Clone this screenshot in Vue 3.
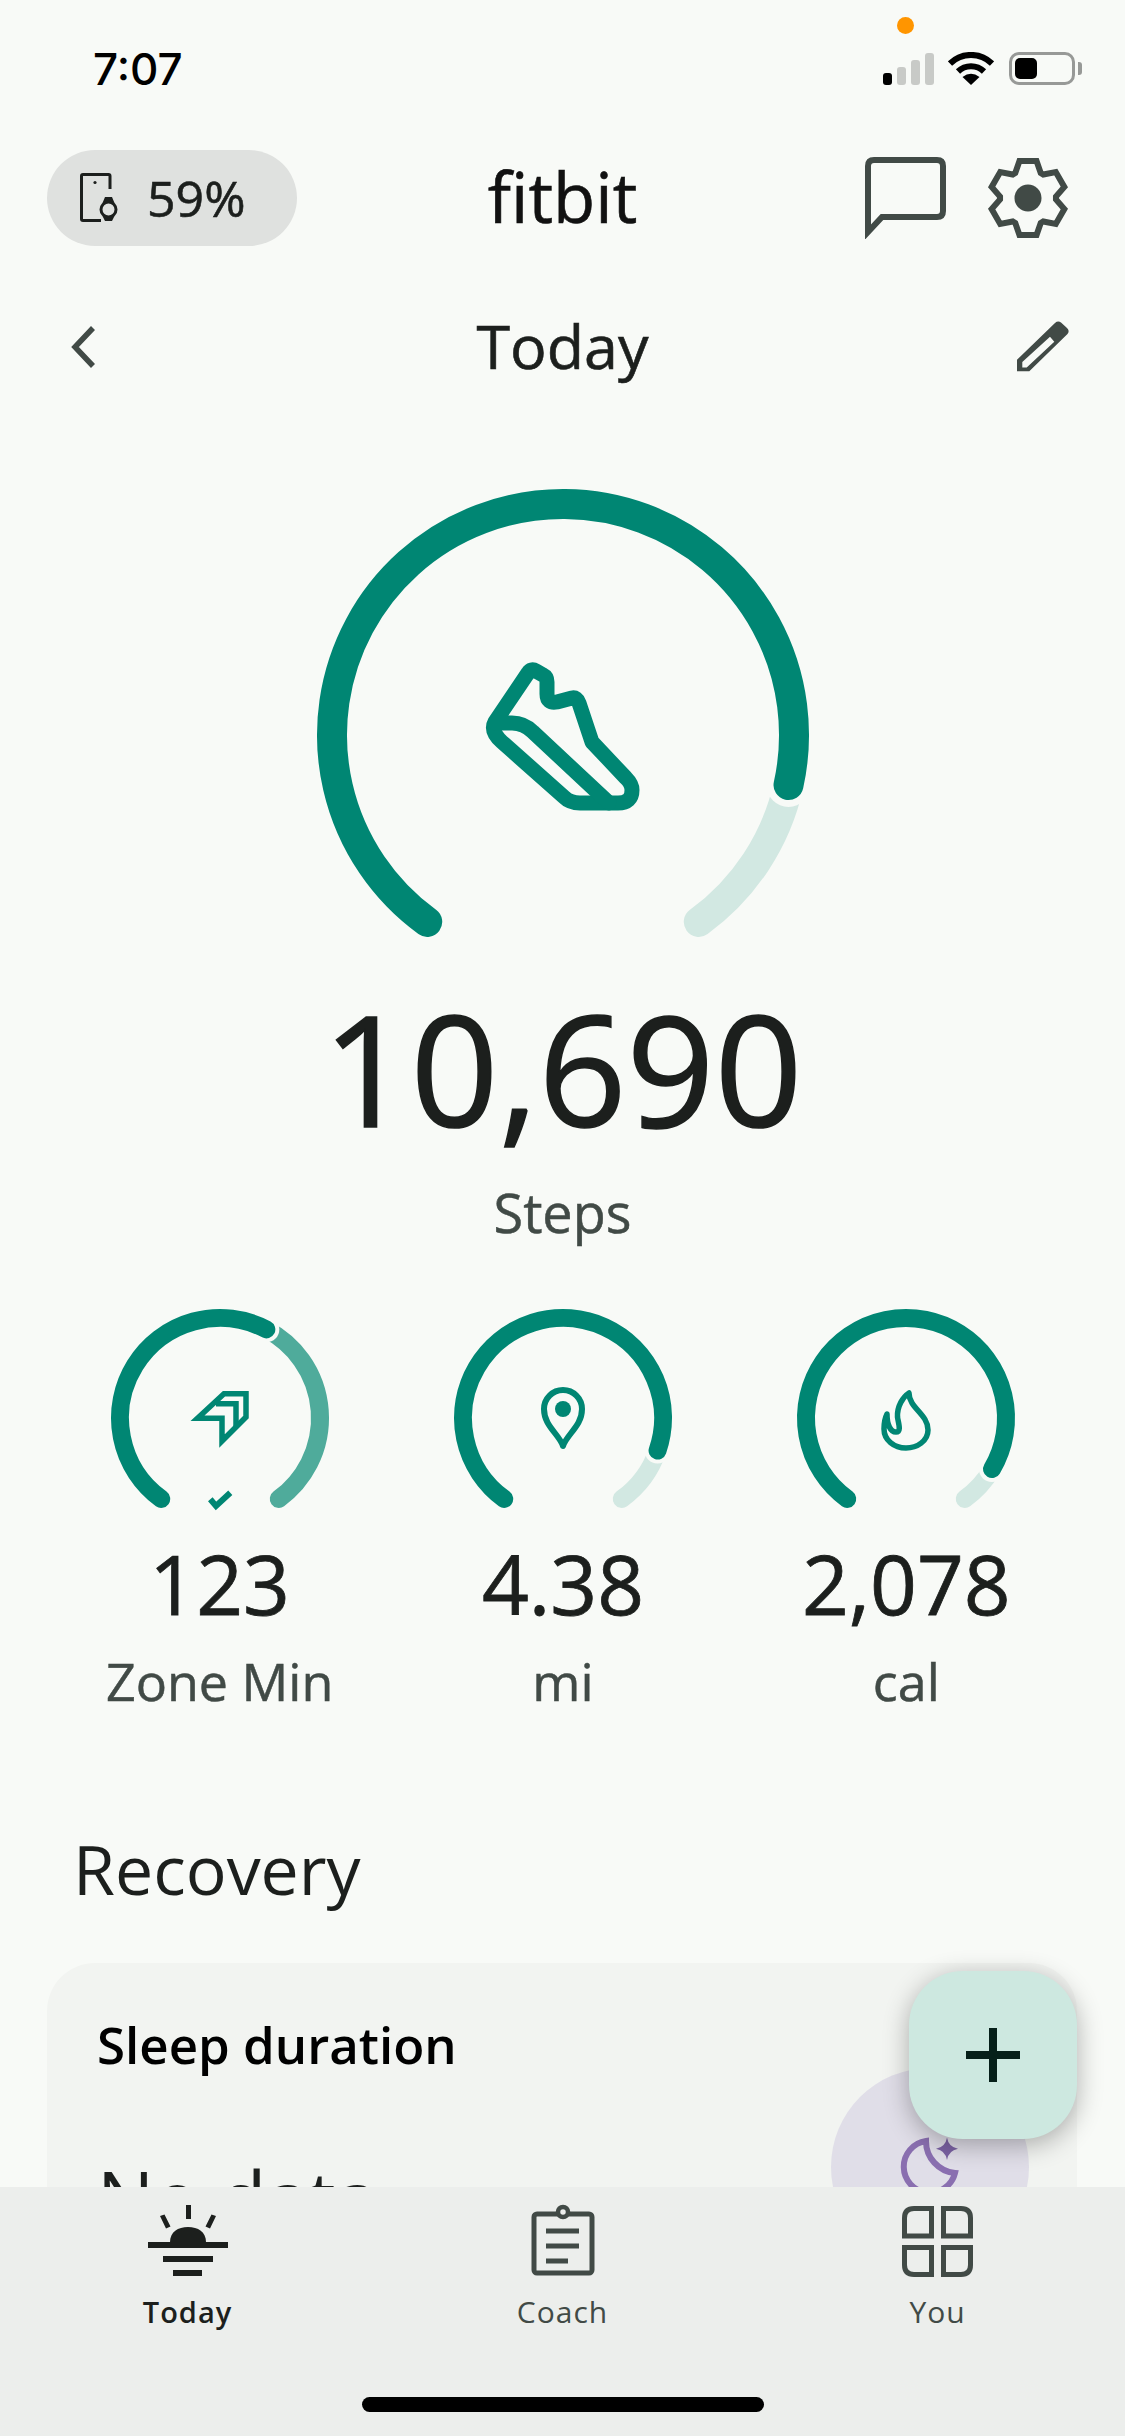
<template>
  <div class="page">
    <div class="main">
      <!-- Status bar -->
      <div class="status">
        <span class="time">7:07</span>
        <span class="rec-dot"></span>
        <div class="status-right">
          <div class="signal">
            <i class="on" style="height: 12px"></i>
            <i style="height: 18px"></i>
            <i style="height: 25px"></i>
            <i style="height: 32px"></i>
          </div>
          <svg class="wifi" width="46" height="33" viewBox="0 0 46 33" fill="none" stroke="#000" stroke-width="6">
            <path d="M2 11.5 A30 30 0 0 1 44 11.5" />
            <path d="M10 19.5 A18.5 18.5 0 0 1 36 19.5" />
            <path d="M23 33 L14.5 25 Q23 18.5 31.5 25 Z" fill="#000" stroke="none" />
          </svg>
          <div class="battery"><span class="battery-fill"></span></div>
          <span class="battery-nub"></span>
        </div>
      </div>

      <!-- Header -->
      <div class="header">
        <div class="pill">
          <svg width="40" height="54" viewBox="0 0 40 54" fill="none" stroke="#1c1f1d" stroke-width="3">
            <path d="M30 18 V5 Q30 3.5 28.5 3.5 H3 Q1.5 3.5 1.5 5 V48 Q1.5 49.5 3 49.5 H21" />
            <circle cx="15" cy="11.5" r="1.6" fill="#1c1f1d" stroke="none" />
            <circle cx="28.5" cy="38.5" r="7.5" />
            <path d="M22.5 32 L25 26 H32 L34.5 32 Z M22.5 45 L25 50 H32 L34.5 45 Z" fill="#1c1f1d" stroke="none" />
          </svg>
          <span class="pill-text">59%</span>
        </div>
        <div class="logo">fitbit</div>
        <div class="header-actions">
          <svg width="81" height="82" viewBox="0 0 81 82" fill="none" stroke="#414a46" stroke-width="6">
            <path d="M3 75 V9 Q3 3 9 3 H72 Q78 3 78 9 V54 Q78 60 72 60 H17 Z" />
          </svg>
          <svg width="82" height="82" viewBox="-41 -41 82 82" fill="none" stroke="#414a46" stroke-width="6">
            <path :d="gearPath" />
            <circle r="13.5" fill="#414a46" stroke="none" />
          </svg>
        </div>
      </div>

      <!-- Date row -->
      <div class="date-row">
        <svg class="back" width="28" height="46" viewBox="0 0 28 46" fill="none" stroke="#414a46" stroke-width="5.5">
          <path d="M24 4 L6 23 L24 42" />
        </svg>
        <span class="date-title">Today</span>
        <svg class="edit" width="55" height="54" viewBox="0 0 55 54">
          <path fill="#414a46" fill-rule="evenodd" d="M2 39.7 L40 3 Q43 0.5 46 2.5 L52 8 Q55 11 52.5 14 L14.3 51.3 H2 Z M7.3 42 L35 16.7 L39.3 21.7 L11.7 47.5 H7.3 Z" />
        </svg>
      </div>

      <!-- Steps ring -->
      <div class="hero">
        <svg width="520" height="470" viewBox="0 0 520 470" fill="none" stroke-linecap="round">
          <path :d="arc(260, 255, 231, 102.5, 144)" stroke="#d2e8e2" stroke-width="30" />
          <circle :cx="polar(260, 255, 231, 102.5).x" :cy="polar(260, 255, 231, 102.5).y" r="22" fill="#f8faf7" />
          <path :d="arc(260, 255, 231, -144, 102.5)" stroke="#008673" stroke-width="30" />
          <g transform="translate(-303 -480)" stroke="#008673" stroke-width="15" stroke-linejoin="round">
            <path d="M495 722 L528 673 Q531 668 536 671 L543 675 Q547 677 547 682 V694 Q547 704 557 702 L572 698 Q577 697 579 703 L592 742 L626 778 Q632 784 632 790 Q632 803 618 803 H580 Q570 803 564 797 L502 742 Q490 731 495 722 Z" />
            <path d="M495 723 H512 Q524 723 533 732 L609 803" />
          </g>
        </svg>
        <div class="hero-value">10,690</div>
        <div class="hero-label">Steps</div>
      </div>

      <!-- Small rings -->
      <div class="stats">
        <div v-for="s in stats" :key="s.label" class="stat">
          <svg width="240" height="220" viewBox="0 0 240 220" fill="none" stroke-linecap="round">
            <path :d="arc(120, 120, 100, s.end, 144)" :stroke="s.rest" stroke-width="18" />
            <circle :cx="polar(120, 120, 100, s.end).x" :cy="polar(120, 120, 100, s.end).y" r="13" fill="#f8faf7" />
            <path :d="arc(120, 120, 100, -144, s.end)" stroke="#008673" stroke-width="18" />

            <g v-if="s.icon === 'zone'" stroke="#008673" stroke-linecap="butt">
              <path d="M124 95.7 H146 V119 L122 143 V120.3 H97.5 Z" stroke-width="5.5" />
              <path d="M116 105.7 H136 V128" stroke-width="5.5" />
              <path d="M110.3 201.3 L116 208 L130.3 194.7" stroke-width="6" />
            </g>
            <g v-else-if="s.icon === 'pin'" stroke="#008673" stroke-width="6" stroke-linejoin="round">
              <path d="M120 148 C116 136 101 128 101 111 A19 19 0 0 1 139 111 C139 128 124 136 120 148 Z" />
              <circle cx="120" cy="111" r="8" fill="#008673" stroke="none" />
            </g>
            <path
              v-else
              d="M123 95 C123 110 142 116 142 132 C142 143 131 150 120 150 C108 150 98 142 98 131 C98 125 99 120 101 116 C101 126 104 134 110 134 C116 134 112 124 111.5 119 C111 108 117 99 123 95 Z"
              stroke="#008673" stroke-width="5.5" stroke-linejoin="round"
            />
          </svg>
          <div class="stat-value">{{ s.value }}</div>
          <div class="stat-label">{{ s.label }}</div>
        </div>
      </div>

      <h2 class="section-title">Recovery</h2>

      <div class="card">
        <div class="card-title">Sleep duration</div>
        <div class="card-value">No data</div>
        <div class="moon-wrap">
          <svg width="198" height="198" viewBox="0 0 198 198" fill="none">
            <path d="M95 73 A26 26 0 1 0 124 105 A32 32 0 0 1 95 73 Z" stroke="#8a6fb0" stroke-width="6" />
            <path d="M116 69.5 Q117.5 79 127 80.7 Q117.5 82.5 116 92 Q114.5 82.5 105 80.7 Q114.5 79 116 69.5 Z" fill="#7b62a3" />
          </svg>
        </div>
      </div>
    </div>

    <button class="fab">
      <svg width="54" height="54" viewBox="0 0 54 54" fill="#06201a">
        <rect x="23" y="0" width="8" height="54" />
        <rect x="0" y="23" width="54" height="8" />
      </svg>
    </button>

    <!-- Bottom nav -->
    <div class="nav">
      <div class="nav-items">
        <div class="nav-item active">
          <div class="nav-icon">
            <svg width="80" height="74" viewBox="0 0 80 74" fill="#1c1f1d">
              <rect x="38" y="1" width="5" height="14" />
              <path d="M12 12 L16.5 10.5 L22.5 22.5 L18 24.5 Z M68 12 L63.5 10.5 L57.5 22.5 L62 24.5 Z" />
              <path d="M22 38 C22 28 30 23 40 23 C50 23 58 28 58 38 Z" />
              <rect x="0" y="38" width="80" height="6" />
              <rect x="15" y="52" width="50" height="6" />
              <rect x="25" y="66" width="29" height="6" />
            </svg>
          </div>
          <span class="nav-label">Today</span>
        </div>
        <div class="nav-item">
          <div class="nav-icon">
            <svg width="64" height="74" viewBox="0 0 64 74" fill="none" stroke="#414a46" stroke-width="5">
              <rect x="3" y="10" width="58" height="59" rx="3" />
              <circle cx="32" cy="8" r="5" fill="#eceeec" stroke-width="4.5" />
              <path d="M15 27 H48 M15 42 H48 M15 57 H37" />
            </svg>
          </div>
          <span class="nav-label">Coach</span>
        </div>
        <div class="nav-item">
          <div class="nav-icon">
            <svg width="71" height="71" viewBox="0 0 71 71" fill="none" stroke="#414a46" stroke-width="5">
              <path d="M12 2.5 H29.5 V30 H2.5 V12 Q2.5 2.5 12 2.5 Z" />
              <path d="M41.5 2.5 H59 Q68.5 2.5 68.5 12 V30 H41.5 Z" />
              <path d="M2.5 41.5 H29.5 V68.5 H12 Q2.5 68.5 2.5 59 Z" />
              <path d="M41.5 41.5 H68.5 V59 Q68.5 68.5 59 68.5 H41.5 Z" />
            </svg>
          </div>
          <span class="nav-label">You</span>
        </div>
      </div>
      <div class="home-bar"></div>
    </div>
  </div>
</template>

<script setup>
const stats = [
  { icon: 'zone', value: '123', label: 'Zone Min', end: 27.6, rest: '#4fab9b' },
  { icon: 'pin', value: '4.38', label: 'mi', end: 109, rest: '#d2e8e2' },
  { icon: 'flame', value: '2,078', label: 'cal', end: 120.7, rest: '#d2e8e2' },
]

// deg is clockwise from 12 o'clock
function polar(cx, cy, r, deg) {
  const a = (deg * Math.PI) / 180
  return { x: cx + r * Math.sin(a), y: cy - r * Math.cos(a) }
}

function arc(cx, cy, r, from, to) {
  const a = polar(cx, cy, r, from)
  const b = polar(cx, cy, r, to)
  const large = to - from > 180 ? 1 : 0
  return `M${a.x} ${a.y} A${r} ${r} 0 ${large} 1 ${b.x} ${b.y}`
}

const gearPath = (() => {
  const pts = []
  for (let k = 0; k < 6; k++) {
    const c = k * 60
    for (const [d, r] of [[-27, 28], [-13, 38], [13, 38], [27, 28]]) {
      const p = polar(0, 0, r, c + d)
      pts.push(`${p.x.toFixed(2)} ${p.y.toFixed(2)}`)
    }
  }
  return 'M' + pts.join(' L') + ' Z'
})()
</script>

<style scoped>
.page {
  position: relative;
  width: 1125px;
  height: 2436px;
  display: flex;
  flex-direction: column;
  overflow: hidden;
  background: #f8faf7;
  font-family: 'Open Sans', 'Noto Sans', sans-serif;
  color: #1c1f1d;
}

.main {
  position: relative;
  flex: 1;
  min-height: 0;
  overflow: hidden;
}

/* Status bar */
.status {
  position: relative;
  height: 140px;
  display: flex;
  justify-content: space-between;
  align-items: flex-start;
  padding: 45px 43px 0 93px;
  box-sizing: border-box;
}
.time {
  font-family: 'Inter', sans-serif;
  font-size: 44px;
  font-weight: 500;
  line-height: 48px;
  color: #000;
}
.rec-dot {
  position: absolute;
  left: 897px;
  top: 17px;
  width: 17px;
  height: 17px;
  border-radius: 50%;
  background: #ff9500;
}
.status-right {
  display: flex;
  align-items: center;
  height: 33px;
  margin-top: 7px;
}
.signal {
  display: flex;
  align-items: flex-end;
  gap: 5px;
  height: 33px;
  margin-right: 14px;
}
.signal i {
  display: block;
  width: 9px;
  border-radius: 3px;
  background: #c8cac7;
}
.signal i.on { background: #000; }
.wifi { margin-right: 15px; }
.battery {
  width: 66px;
  height: 33px;
  box-sizing: border-box;
  border: 3px solid #979997;
  border-radius: 10px;
  padding: 3px;
}
.battery-fill {
  display: block;
  width: 22px;
  height: 100%;
  border-radius: 5px;
  background: #000;
}
.battery-nub {
  width: 4px;
  height: 13px;
  margin-left: 3px;
  border-radius: 0 3px 3px 0;
  background: #979997;
}

/* Header */
.header {
  display: grid;
  grid-template-columns: 1fr auto 1fr;
  align-items: center;
  height: 96px;
  margin-top: 10px;
  padding: 0 47px;
}
.pill {
  display: flex;
  align-items: center;
  gap: 27px;
  width: 250px;
  height: 96px;
  box-sizing: border-box;
  padding-left: 33px;
  border-radius: 48px;
  background: #dfe1df;
}
.pill-text {
  font-size: 50px;
  line-height: 1;
  -webkit-text-stroke: 0.6px #1c1f1d;
}
.logo {
  font-size: 69px;
  line-height: 92px;
  padding-bottom: 4px;
  color: #111;
  -webkit-text-stroke: 0.6px #111;
}
.header-actions {
  display: flex;
  justify-content: flex-end;
  gap: 41px;
  margin-right: 9px;
}

/* Date row */
.date-row {
  display: grid;
  grid-template-columns: 1fr auto 1fr;
  align-items: center;
  height: 60px;
  margin-top: 71px;
  padding: 0 55px;
}
.back { margin-left: 14px; }
.edit { justify-self: end; }
.date-title {
  font-size: 61px;
  line-height: 58px;
  padding-bottom: 2px;
  -webkit-text-stroke: 0.6px #1c1f1d;
}

/* Hero */
.hero {
  display: flex;
  flex-direction: column;
  align-items: center;
  margin-top: 103px;
}
.hero-value {
  margin-top: 37px;
  font-size: 154px;
  line-height: 160px;
  -webkit-text-stroke: 1.5px #1c1f1d;
}
.hero-label {
  margin-top: 30px;
  font-size: 54px;
  line-height: 70px;
  color: #414a46;
  -webkit-text-stroke: 0.5px #414a46;
}

/* Stats */
.stats {
  display: grid;
  grid-template-columns: repeat(3, 1fr);
  margin-top: 51px;
  padding: 0 47px 0 48px;
}
.stat {
  display: flex;
  flex-direction: column;
  align-items: center;
}
.stat-value {
  margin-top: 20px;
  font-size: 82px;
  line-height: 90px;
  -webkit-text-stroke: 0.8px #1c1f1d;
}
.stat-label {
  margin-top: 18px;
  font-size: 52px;
  line-height: 70px;
  color: #414a46;
  -webkit-text-stroke: 0.5px #414a46;
}

.section-title {
  margin: 108px 0 0 73px;
  font-size: 68px;
  font-weight: 400;
  line-height: 90px;
}

/* Card */
.card {
  position: relative;
  height: 400px;
  margin: 49px 48px 0 47px;
  padding: 49px 50px 0;
  border-radius: 48px;
  background: #f2f4f1;
}
.card-title {
  font-size: 51px;
  font-weight: 600;
  line-height: 64px;
  color: #000;
}
.card-value {
  margin-top: 72px;
  font-size: 76px;
  line-height: 100px;
  color: #1c1f1d;
}
.moon-wrap {
  position: absolute;
  top: 105px;
  right: 48px;
  width: 198px;
  height: 198px;
  border-radius: 50%;
  background: #e0dee8;
}

/* FAB */
.fab {
  position: absolute;
  left: 909px;
  top: 1971px;
  width: 168px;
  height: 168px;
  display: flex;
  align-items: center;
  justify-content: center;
  padding: 0;
  border: none;
  border-radius: 54px;
  background: #cde8e0;
  box-shadow: 0 6px 26px rgba(0, 0, 0, 0.3);
}

/* Bottom nav */
.nav {
  position: relative;
  height: 249px;
  flex-shrink: 0;
  background: #eceeec;
}
.nav-items {
  display: grid;
  grid-template-columns: repeat(3, 1fr);
  padding-top: 16px;
}
.nav-item {
  display: flex;
  flex-direction: column;
  align-items: center;
}
.nav-icon {
  display: flex;
  align-items: center;
  justify-content: center;
  height: 76px;
}
.nav-label {
  margin-top: 13px;
  font-size: 30px;
  line-height: 40px;
  letter-spacing: 1px;
  color: #414a46;
}
.nav-item.active .nav-label {
  font-size: 29px;
  font-weight: 600;
  color: #1c1f1d;
}
.home-bar {
  width: 402px;
  height: 15px;
  margin: 65px auto 0;
  border-radius: 8px;
  background: #000;
}
</style>
